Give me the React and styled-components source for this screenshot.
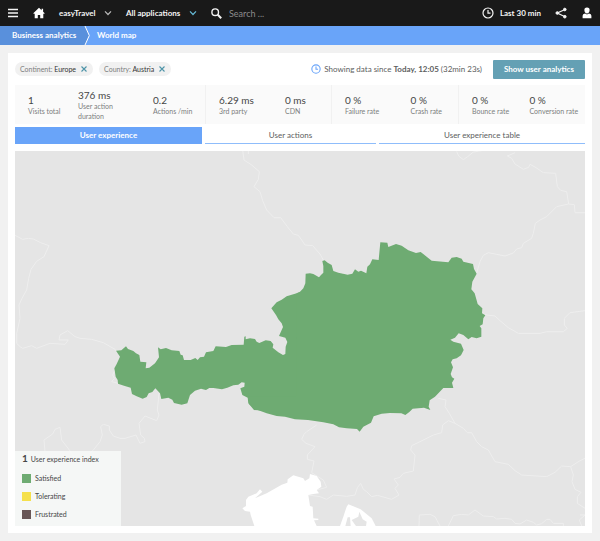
import React, { useState } from "react";
import styled, { createGlobalStyle } from "styled-components";

const Global = createGlobalStyle`
  * { box-sizing: border-box; }
  body { margin: 0; background: #f1f1f1; color: #454646; font: 8px/11px Lato, "Open Sans", sans-serif; }
  button, input { font: inherit; color: inherit; border: 0; padding: 0; background: none; }
  a { color: inherit; text-decoration: none; }
  svg { display: block; flex: none; }
`;

const TopBar = styled.header`
  display: flex;
  align-items: center;
  height: 26px;
  padding: 0 8px;
  background: #191919;
  color: #f4f4f4;
  font-size: 8px;
  font-weight: 700;
`;
const IconButton = styled.button`
  display: flex;
  margin-right: ${(p) => p.$gap || 0}px;
`;
const MenuButton = styled.button`
  display: flex;
  align-items: center;
  justify-content: space-between;
  width: ${(p) => p.$width}px;
  margin-right: 14px;
  white-space: nowrap;
`;
const SearchBox = styled.label`
  display: flex;
  align-items: center;
  gap: 7px;
  flex: 1;
  min-width: 0;
  font-size: 9px;
  font-weight: 400;
`;
const SearchInput = styled.input`
  width: 100%;
  min-width: 0;
  outline: none;
  &::placeholder { color: #8c8c8c; opacity: 1; }
`;
const TimeButton = styled.button`
  display: flex;
  align-items: center;
  gap: 6px;
  margin-right: 14px;
  white-space: nowrap;
`;

const Crumbs = styled.nav`
  display: flex;
  height: 19px;
  background: #69a4f9;
  color: #fff;
  font-size: 8px;
  font-weight: 700;
  line-height: 18px;
`;
const Crumb = styled.a`
  padding-left: ${(p) => (p.$root ? 12 : 7)}px;
  width: ${(p) => (p.$root ? "84px" : "auto")};
  background: ${(p) => (p.$root ? "#5990dc" : "transparent")};
  white-space: nowrap;
`;

const Panel = styled.main`
  margin: 8px;
  padding: 7px;
  background: #fff;
`;
const FilterRow = styled.div`
  display: flex;
  align-items: center;
  gap: 6px;
  height: 18px;
  margin-bottom: 7px;
`;
const Chip = styled.span`
  display: flex;
  align-items: center;
  gap: 5px;
  height: 14px;
  padding: 0 6px 0 5px;
  border-radius: 7px;
  background: #f1f1f1;
  color: #7c7e7e;
  font-size: 7px;
  white-space: nowrap;
`;
const ChipValue = styled.span`
  color: #353636;
`;
const DataInfo = styled.p`
  display: flex;
  align-items: center;
  gap: 3px;
  margin: 0 5px 0 auto;
  color: #5c5e5e;
  white-space: nowrap;
`;
const PrimaryButton = styled.button`
  height: 19px;
  padding: 0 11px;
  border-radius: 1px;
  background: #64a0b4;
  color: #fff;
  font-weight: 700;
  white-space: nowrap;
`;

const Stats = styled.div`
  display: grid;
  grid-template-columns: 190fr 126fr 127fr 127fr;
  height: 39px;
  background: #fafafa;
`;
const StatGroup = styled.dl`
  display: grid;
  grid-template-columns: ${(p) => p.$columns};
  align-items: center;
  margin: 0;
  padding-left: 13px;
  & + & { border-left: 1px solid #f1f1f1; }
`;
const Stat = styled.div`
  display: flex;
  flex-direction: column;
  min-width: 0;
`;
const StatValue = styled.dd`
  margin: 0;
  font-size: 10px;
  line-height: 12px;
`;
const StatLabel = styled.dt`
  color: #7c7e7e;
  font-size: 7px;
  line-height: 10px;
  width: ${(p) => (p.$wrap ? "48px" : "auto")};
  white-space: ${(p) => (p.$wrap ? "normal" : "nowrap")};
`;

const Tabs = styled.div`
  display: grid;
  grid-template-columns: 187fr 171fr 206fr;
  gap: 3px;
  margin: 3px 0 7px;
`;
const Tab = styled.button`
  height: 17px;
  border-bottom: 1px solid ${(p) => (p.$active ? "#69a4f9" : "#8fbdfb")};
  background: ${(p) => (p.$active ? "#69a4f9" : "transparent")};
  color: ${(p) => (p.$active ? "#fff" : "#5c5e5e")};
  font-weight: ${(p) => (p.$active ? 700 : 400)};
`;

const MapArea = styled.section`
  position: relative;
`;
const MapDrawing = styled.svg`
  width: 100%;
  background: #e5e5e5;
`;
const Legend = styled.aside`
  position: absolute;
  left: 0;
  bottom: 0;
  width: 106px;
  height: 75px;
  padding: 1px 7px;
  background: rgba(247, 249, 248, 0.88);
  font-size: 7px;
`;
const LegendTitle = styled.h2`
  display: flex;
  align-items: baseline;
  gap: 3px;
  margin: 0 0 8px;
  font-size: 7px;
  line-height: 12px;
  font-weight: 400;
  white-space: nowrap;
`;
const LegendCount = styled.strong`
  font-size: 10px;
`;
const LegendList = styled.ul`
  display: grid;
  gap: 7px;
  margin: 0;
  padding: 0;
  list-style: none;
`;
const LegendItem = styled.li`
  display: flex;
  align-items: center;
  gap: 4px;
  line-height: 11px;
`;
const Swatch = styled.span`
  width: 9px;
  height: 9px;
  background: ${(p) => p.$color};
`;

const Chevron = ({ color }) => (
  <svg width="8" height="6" viewBox="0 0 8 6" fill="none" stroke={color} strokeWidth="1.2">
    <path d="M1 1.3 4 4.5 7 1.3" />
  </svg>
);
const Clock = ({ size, color, width }) => (
  <svg width={size} height={size} viewBox="0 0 12 12" fill="none" stroke={color} strokeWidth={width}>
    <circle cx="6" cy="6" r="5" />
    <path d="M6 3v3.2h2.5" />
  </svg>
);
const Cross = () => (
  <svg width="6" height="6" viewBox="0 0 6 6" stroke="#4e94a8" strokeWidth="1.1">
    <path d="M.5.5l5 5M5.5.5l-5 5" />
  </svg>
);

const stats = [
  { columns: "50fr 75fr 52fr", items: [["1", "Visits total"], ["376 ms", "User action duration", true], ["0.2", "Actions /min"]] },
  { columns: "66fr 46fr", items: [["6.29 ms", "3rd party"], ["0 ms", "CDN"]] },
  { columns: "65fr 47fr", items: [["0 %", "Failure rate"], ["0 %", "Crash rate"]] },
  { columns: "57fr 55fr", items: [["0 %", "Bounce rate"], ["0 %", "Conversion rate"]] },
];
const tabs = ["User experience", "User actions", "User experience table"];
const levels = [["Satisfied", "#6eab72"], ["Tolerating", "#f5e04c"], ["Frustrated", "#695757"]];

const WorldMap = () => (
  <MapDrawing viewBox="45 453 1710 1125" role="img" aria-label="Map of Austria">
    <g fill="none" stroke="#eeeeee" strokeWidth="3" strokeLinejoin="round">
      <g transform="translate(0 450)">
        <path d="M45 256 68 268 85 265 100 267 122 278 147 287 132 320 110 334 93 358 86 385 80 420 66 445 57 465 60 505 50 550 50 580 60 590 68 595 95 587 110 595 150 580 195 583 205 570 177 570 180 555 203 542 225 560 240 565 275 568 310 578 345 598 352 606" />
        <path d="M728 0 732 30 755 45 778 65 775 88 762 110 780 125 788 152 800 180 822 203 842 203 862 230 880 252 895 256 905 270 915 285 938 287 960 312 970 330M745 0V12" />
      </g>
      <g transform="translate(900 450)">
        <path d="M470 4 476 18 490 29 503 20 520 6 545 2M645 8 622 18 635 25 645 42 670 58 686 52 690 43 708 53 730 68 767 70 772 110 782 121 800 125 806 162 823 164 825 188 855 188M806 162 770 170 740 200 720 210 706 220 700 250 695 265 670 280 665 293 650 297 640 309 615 318 590 313 565 308 550 316 540 335 529 372M553 494 585 498 600 512 625 533 655 550 720 550 740 545 790 545 802 535 793 525 793 505 810 488 855 482" />
      </g>
      <g transform="translate(30 990)">
        <path d="M315 120 308 135 313 145 305 155 325 160M447 190 442 240 447 255 440 272 405 258 387 280 392 315 403 325 405 335 390 340 378 315 345 325 330 325 310 318 298 300 298 288 280 283 272 290 277 315 270 335 250 360 225 385M105 365 102 330 128 312 135 298 150 292 155 330 178 360 195 385" />
      </g>
      <g transform="translate(600 1200)">
        <path d="M350 75 320 95 312 103 305 118 318 130 345 140 322 165 322 178 342 183 335 218 370 240 380 262 350 270M325 285 360 290 380 298 400 285 440 289 465 285 472 263 482 250 490 268 500 275 515 290 532 286 575 298 597 285 585 265 595 255 582 237 600 232 610 220 640 213 645 165 632 150 635 137 660 125 700 105 725 98 728 75 745 62 765 70 748 40 735 20 738 0 715 -5" />
        <path d="M765 70 790 85 802 98 815 98 830 125 845 140 865 150 885 185 925 193 945 212 965 225 1040 230 1065 217 1085 198 1112 200 1140 182 1155 175M1112 200 1120 225 1116 245 1125 268 1143 277 1132 290 1132 310 1155 325M657 378 658 345 690 343 705 350 720 378M745 378 760 347 785 343 805 345 825 330 850 348 880 350 890 357 915 355 935 358 945 370 960 372 980 360 1000 367 1010 375 1025 371 1040 358 1050 358 1060 370 1090 370 1090 378M1140 345 1155 345M1145 378 1138 360 1155 345" />
      </g>
    </g>
    <g fill="#fff" transform="translate(600 1200)">
      <path d="M163 378 152 345 150 335 135 333 127 325 138 318 138 300 145 290 170 280 180 268 187 275 165 295 200 280 245 254 262 248 263 238 280 226 310 235 315 243 328 235 330 222 350 228 362 245 364 260 350 270 357 280 340 282 325 285 330 318 338 320 340 355 355 356 355 360 342 361 350 378Z" />
      <path d="M420 378 430 350 440 320 445 313 482 328 515 355 527 378 498 378 500 365 488 358 478 335 475 350 455 360 468 378 452 378 450 352 443 352 436 378Z" />
    </g>
    <g fill="#6eab72">
      <path transform="translate(300 690)" d="M48 362 64 361 78 349 84 357 100 363 108 370 118 375 121 395 139 397 137 415 148 413 165 400 177 382 174 352 182 358 198 354 215 361 238 363 242 374 248 376 252 390 272 390 286 384 293 390 300 382 312 380 318 367 340 363 347 349 378 351 395 345 431 344 433 320 437 319 437 328 450 325 465 327 470 335 478 339 497 331 512 333 520 343 518 353 535 367 549 375 556 372 557 350 562 336 556 323 537 318 549 291 545 280 535 268 528 255 514 235 530 217 545 209 560 199 580 193 600 187 620 187 620 550 462 540 445 520 443 503 427 495 421 475 433 470 434 458 425 457 415 464 400 466 382 473 366 478 340 474 328 474 318 480 303 476 285 482 270 495 262 520 245 524 222 519 217 509 205 503 184 507 180 490 166 475 157 486 146 490 140 501 128 506 110 499 96 492 92 473 72 467 54 461 53 450 47 440 43 415 50 402 60 380Z" />
      <path transform="translate(840 690)" d="M50 190 60 185 70 175 76 160 77 131 90 130 100 132 117 142 123 135 130 128 130 108 127 93 134 91 143 98 155 105 160 123 175 128 203 134 217 131 225 118 235 125 243 122 259 130 262 110 270 103 277 88 296 90 301 37 322 38 325 51 348 42 365 47 385 61 408 69 422 66 440 80 455 92 505 97 515 83 530 81 545 86 550 95 579 102 582 117 590 131 577 155 574 178 584 190 593 222 607 235 606 250 616 256 610 265 608 283 599 288 604 295 604 320 590 325 575 321 565 328 550 315 536 310 525 323 511 329 520 335 543 341 551 360 543 376 530 385 518 388 513 397 519 412 512 432 516 442 523 446 516 458 520 474 490 474 465 500 449 511 446 530 451 540 432 533 398 536 388 546 376 555 364 550 330 549 305 551 281 559 273 578 250 590 239 605 231 597 200 595 177 592 160 583 130 577 84 570 45 568 15 560 -10 558 -40 550 -75 537 -93 522 -95 500 50 500Z" />
    </g>
  </MapDrawing>
);

export default function App() {
  const [active, setActive] = useState(0);
  return (
    <>
      <Global />
      <TopBar>
        <IconButton $gap={15} aria-label="Menu">
          <svg width="10" height="10" viewBox="0 0 10 10" stroke="#f4f4f4" strokeWidth="1.4">
            <path d="M0 1.5h10M0 5h10M0 8.5h10" />
          </svg>
        </IconButton>
        <IconButton $gap={14} aria-label="Home">
          <svg width="12" height="12" viewBox="0 0 12 12" fill="#fff">
            <path d="M6 .7 8.6 3.2V1.7h1.5v3L11.7 6.3 11 7l-.7-.6V11.3H7.2V8H4.8v3.3H1.7V6.4L1 7l-.7-.7Z" />
          </svg>
        </IconButton>
        <MenuButton $width={53}>easyTravel <Chevron color="#b8b8b8" /></MenuButton>
        <MenuButton $width={71}>All applications <Chevron color="#65b8d4" /></MenuButton>
        <SearchBox>
          <svg width="11" height="11" viewBox="0 0 11 11" fill="none" stroke="#f4f4f4">
            <circle cx="4.2" cy="4.2" r="3.3" strokeWidth="1.4" />
            <path d="M6.8 6.8 10.2 10.2" strokeWidth="2" />
          </svg>
          <SearchInput aria-label="Search" placeholder="Search ..." />
        </SearchBox>
        <TimeButton><Clock size={12} color="#f4f4f4" width={1.2} /> Last 30 min</TimeButton>
        <IconButton $gap={15} aria-label="Share">
          <svg width="12" height="12" viewBox="0 0 12 12" fill="#f4f4f4" stroke="#f4f4f4">
            <path d="M10 2.5 2.3 6 10 9.7" fill="none" strokeWidth="1.2" />
            <circle cx="9.8" cy="2.5" r="1.3" />
            <circle cx="2.3" cy="6" r="1.3" />
            <circle cx="9.8" cy="9.7" r="1.3" />
          </svg>
        </IconButton>
        <IconButton aria-label="User">
          <svg width="10" height="12" viewBox="0 0 10 12" fill="#fff">
            <path d="M5 .5a2.6 2.6 0 0 1 2.6 2.8C7.6 5 6.5 6.5 5 6.5S2.4 5 2.4 3.3A2.6 2.6 0 0 1 5 .5ZM.6 11.3V8.8Q.6 6.7 3 6.4L5 7.5 7 6.4q2.4.3 2.4 2.4v2.5Z" />
          </svg>
        </IconButton>
      </TopBar>
      <Crumbs aria-label="Breadcrumb">
        <Crumb $root href="#business">Business analytics</Crumb>
        <svg width="6" height="19" viewBox="0 0 6 19">
          <path d="M0 0h1L5.3 9.5 1 19H0Z" fill="#5990dc" />
          <path d="M1 0 5.3 9.5 1 19" fill="none" stroke="#fff" />
        </svg>
        <Crumb href="#map">World map</Crumb>
      </Crumbs>
      <Panel>
        <FilterRow>
          <Chip><span>Continent: <ChipValue>Europe</ChipValue></span><IconButton aria-label="Remove Europe"><Cross /></IconButton></Chip>
          <Chip><span>Country: <ChipValue>Austria</ChipValue></span><IconButton aria-label="Remove Austria"><Cross /></IconButton></Chip>
          <DataInfo>
            <Clock size={10} color="#69a4f9" width={1.3} />
            <span>Showing data since <b>Today, 12:05</b> (32min 23s)</span>
          </DataInfo>
          <PrimaryButton>Show user analytics</PrimaryButton>
        </FilterRow>
        <Stats>
          {stats.map((group) => (
            <StatGroup key={group.columns} $columns={group.columns}>
              {group.items.map(([value, label, wrap]) => (
                <Stat key={label}>
                  <StatValue>{value}</StatValue>
                  <StatLabel $wrap={wrap}>{label}</StatLabel>
                </Stat>
              ))}
            </StatGroup>
          ))}
        </Stats>
        <Tabs role="tablist">
          {tabs.map((label, i) => (
            <Tab key={label} role="tab" aria-selected={i === active} $active={i === active} onClick={() => setActive(i)}>{label}</Tab>
          ))}
        </Tabs>
        <MapArea>
          <WorldMap />
          <Legend>
            <LegendTitle><LegendCount>1</LegendCount> User experience index</LegendTitle>
            <LegendList>
              {levels.map(([label, color]) => (
                <LegendItem key={label}><Swatch $color={color} />{label}</LegendItem>
              ))}
            </LegendList>
          </Legend>
        </MapArea>
      </Panel>
    </>
  );
}
